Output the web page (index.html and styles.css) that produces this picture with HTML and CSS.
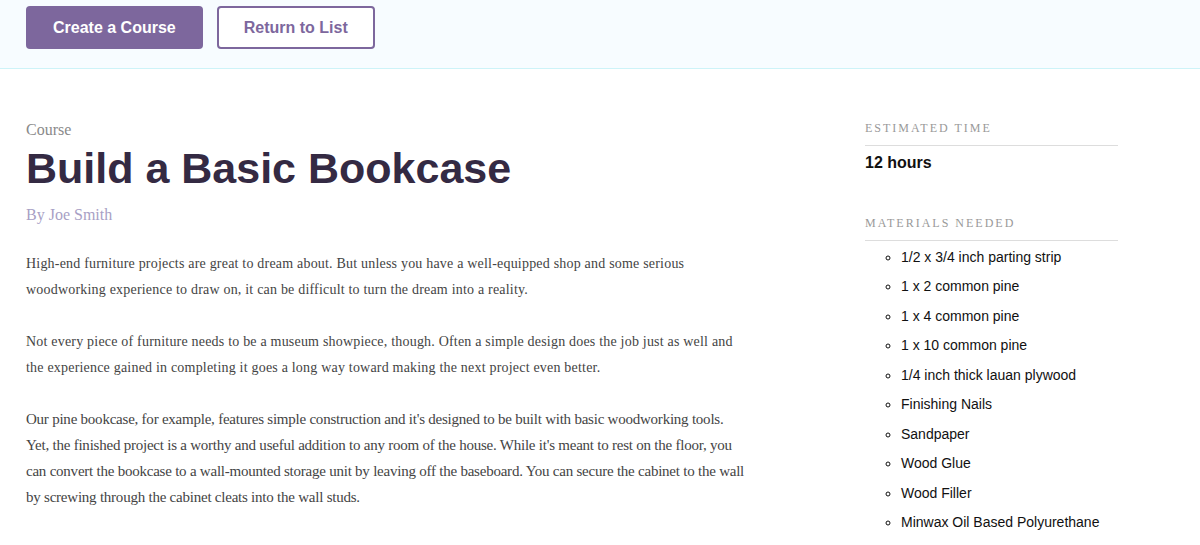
FILE: index.html
```html
<!DOCTYPE html>
<html lang="en">
<head>
<meta charset="utf-8">
<title>Build a Basic Bookcase</title>
<link rel="stylesheet" href="styles.css">
</head>
<body>
<header class="topbar">
  <a class="btn btn-primary" href="#">Create a Course</a>
  <a class="btn btn-outline" href="#">Return to List</a>
</header>
<main class="course">
  <section class="course-main">
    <p class="eyebrow">Course</p>
    <h1 class="title">Build a Basic Bookcase</h1>
    <p class="author">By Joe Smith</p>
    <div class="description">
      <p>High-end furniture projects are great to dream about. But unless you have a well-equipped shop and some serious woodworking experience to draw on, it can be difficult to turn the dream into a reality.</p>
      <p>Not every piece of furniture needs to be a museum showpiece, though. Often a simple design does the job just as well and the experience gained in completing it goes a long way toward making the next project even better.</p>
      <p class="condensed">Our pine bookcase, for example, features simple construction and it's designed to be built with basic woodworking tools. Yet, the finished project is a worthy and useful addition to any room of the house. While it's meant to rest on the floor, you can convert the bookcase to a wall-mounted storage unit by leaving off the baseboard. You can secure the cabinet to the wall by screwing through the cabinet cleats into the wall studs.</p>
    </div>
  </section>
  <aside class="course-side">
    <div class="side-block">
      <h4 class="side-label">Estimated Time</h4>
      <h3 class="side-value">12 hours</h3>
    </div>
    <div class="side-block">
      <h4 class="side-label">Materials Needed</h4>
      <ul class="materials">
        <li>1/2 x 3/4 inch parting strip</li>
        <li>1 x 2 common pine</li>
        <li>1 x 4 common pine</li>
        <li>1 x 10 common pine</li>
        <li>1/4 inch thick lauan plywood</li>
        <li>Finishing Nails</li>
        <li>Sandpaper</li>
        <li>Wood Glue</li>
        <li>Wood Filler</li>
        <li>Minwax Oil Based Polyurethane</li>
      </ul>
    </div>
  </aside>
</main>
</body>
</html>
```

FILE: styles.css
```css
* { box-sizing: border-box; }

html, body {
  margin: 0;
  padding: 0;
  background: #ffffff;
}

body {
  font-family: "Liberation Serif", "Times New Roman", serif;
  color: #444444;
}

.topbar {
  display: flex;
  gap: 14px;
  padding: 6px 26px 19px;
  background: #f7fcff;
  border-bottom: 1px solid #cdf3f8;
}

.btn {
  display: inline-flex;
  align-items: center;
  justify-content: center;
  height: 43px;
  padding: 0 27px;
  border-radius: 4px;
  font-family: "Liberation Sans", Arial, sans-serif;
  font-size: 16px;
  font-weight: 700;
  text-decoration: none;
  white-space: nowrap;
}

.btn-primary {
  background: #7d679d;
  color: #ffffff;
}

.btn-outline {
  background: #ffffff;
  color: #7d679d;
  border: 2px solid #7d679d;
  padding: 0 25px;
}

.course {
  display: grid;
  grid-template-columns: 720px 253px;
  column-gap: 119px;
  padding: 51px 26px 0;
}

.eyebrow {
  margin: 0;
  font-size: 16px;
  line-height: 20px;
  color: #8a8a8a;
}

.title {
  margin: 4px 0 0;
  font-family: "Liberation Sans", Arial, sans-serif;
  font-size: 43px;
  line-height: 48px;
  font-weight: 700;
  color: #342a43;
}

.author {
  margin: 13px 0 0;
  font-size: 16px;
  line-height: 20px;
  color: #a89fc5;
}

.description {
  margin-top: 26px;
}

.description p {
  margin: 0 0 25.5px;
  font-size: 14px;
  line-height: 26px;
  letter-spacing: 0.2px;
  color: #444444;
}

.description p.condensed {
  font-size: 15px;
  letter-spacing: -0.23px;
}

.side-block {
  margin-bottom: 42px;
}

.side-label {
  margin: 0;
  padding-bottom: 9px;
  border-bottom: 1px solid #dddddd;
  font-size: 12px;
  line-height: 16px;
  font-weight: 400;
  letter-spacing: 2px;
  text-transform: uppercase;
  color: #999999;
}

.side-value {
  margin: 7px 0 0;
  font-family: "Liberation Sans", Arial, sans-serif;
  font-size: 16px;
  line-height: 20px;
  font-weight: 700;
  color: #111111;
}

.materials {
  margin: 2px 0 0;
  padding-left: 36px;
  list-style: circle;
  font-family: "Liberation Sans", Arial, sans-serif;
  font-size: 14px;
  line-height: 29.44px;
  color: #111111;
}
```
